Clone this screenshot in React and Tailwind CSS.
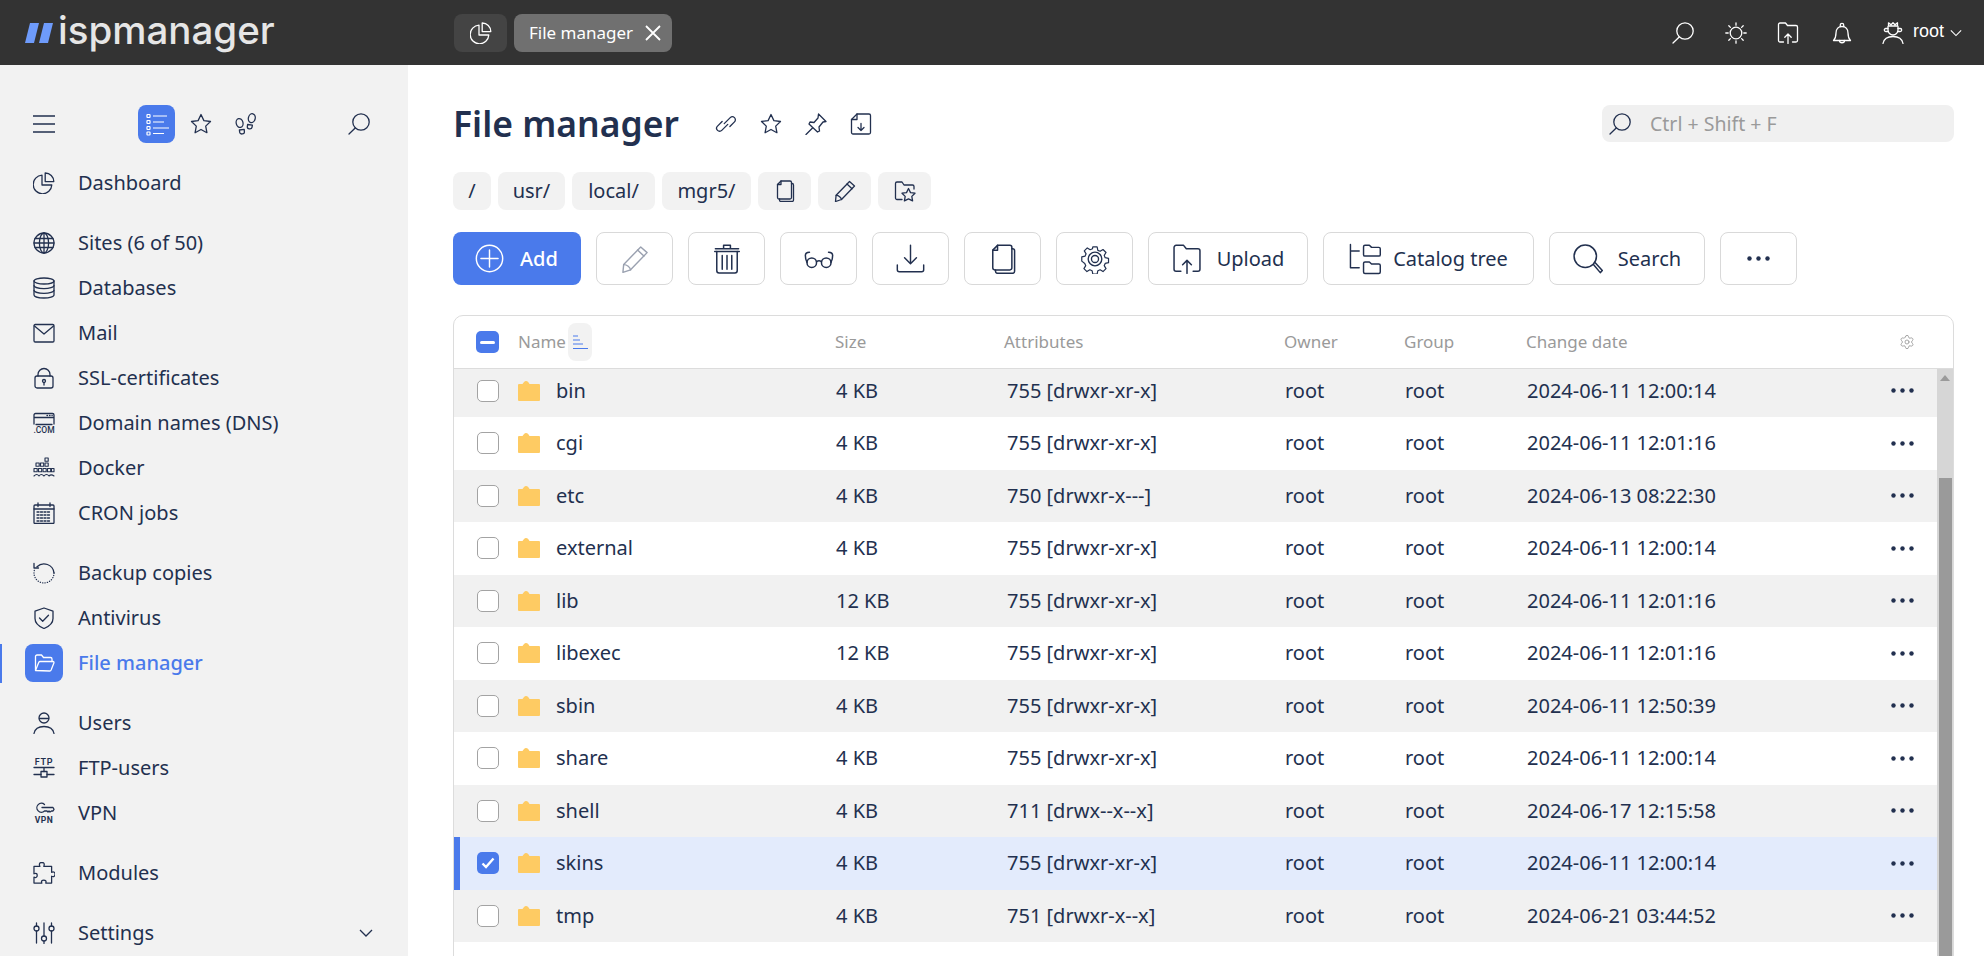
import React from "react";
import { Settings } from "lucide-react";

// base wrapper for all the line icons, drawn on a 22 unit grid
const Ico = ({ s = 22, sw = 1.3, className = "", children }) => (
  <svg
    width={s}
    height={s}
    viewBox="0 0 22 22"
    fill="none"
    stroke="currentColor"
    strokeWidth={sw}
    strokeLinecap="round"
    strokeLinejoin="round"
    className={"shrink-0 " + className}
  >
    {children}
  </svg>
);

const Pie = (p) => (
  <Ico {...p}>
    <path d="M9 3.2A9.3 9.3 0 1 0 18.8 13H9Z" />
    <path d="M12.2 1v8.6h8.6A8.6 8.6 0 0 0 12.2 1Z" />
  </Ico>
);
const Loupe = (p) => (
  <Ico {...p}>
    <circle cx="13" cy="9" r="8.2" />
    <path d="M7.2 15 1 21" />
  </Ico>
);
const Star = (p) => (
  <Ico {...p}>
    <path d="M11 1.5l2.9 6.1 6.6.9-4.8 4.6 1.2 6.6-5.900-3.200-5.900 3.200 1.200-6.600L1.500 8.500l6.600-.9Z" />
  </Ico>
);
const Steps = (p) => (
  <Ico {...p}>
    <ellipse cx="4.600" cy="10" rx="3.400" ry="4.500" transform="rotate(-14 4.600 10)" />
    <path d="M4.400 17l4.800-.7.200 2.600c.2 2.400-4.300 2.900-4.700.5Z" />
    <ellipse cx="16.800" cy="5.200" rx="3.400" ry="4.500" transform="rotate(14 16.800 5.200)" />
    <path d="M17.400 12.200l-4.800-.7-.3 2.300c-.2 2.400 4.300 2.900 4.700.5Z" />
  </Ico>
);
const Globe = (p) => (
  <Ico {...p}>
    <circle cx="11" cy="11" r="10" />
    <ellipse cx="11" cy="11" rx="4.600" ry="10" />
    <path d="M11 1v20M2 6.500h18M1 11h20M2 15.500h18" />
  </Ico>
);
const Db = (p) => (
  <Ico {...p}>
    <ellipse cx="11" cy="4" rx="10" ry="3" />
    <path d="M1 4v14c0 1.700 4.500 3 10 3s10-1.300 10-3V4" />
    <path d="M1 8.600c0 1.700 4.500 3 10 3s10-1.300 10-3M1 13.300c0 1.700 4.500 3 10 3s10-1.300 10-3" />
  </Ico>
);
const Mail = (p) => (
  <Ico {...p}>
    <rect x="1" y="2.500" width="20" height="17.500" rx="1.200" />
    <path d="M1.500 4l9.500 8 9.500-8" />
  </Ico>
);
const Lock = (p) => (
  <Ico {...p}>
    <rect x="2" y="9" width="18" height="12" rx="2" />
    <path d="M5 9V7.500a6 6 0 0 1 12 0V9" />
    <circle cx="11" cy="14" r="1.500" />
    <path d="M11 15.500v2.500" />
  </Ico>
);
const Dns = (p) => (
  <Ico {...p}>
    <path d="M1 12V3a1.500 1.500 0 0 1 1.500-1.500h17A1.500 1.500 0 0 1 21 3v9M1 5.500h20M3 12.500h16" />
    <path d="M14 3.500h.5M16.500 3.500h.5M19 3.500h.2" />
    <text x="11" y="20.500" textAnchor="middle" fontSize="8.500" fontWeight="500" fontFamily="Roboto, sans-serif" fill="currentColor" stroke="none">.COM</text>
  </Ico>
);
const Docker = (p) => (
  <Ico {...p} sw={1.100}>
    <rect x="12" y="1" width="3.200" height="3.200" />
    <rect x="3" y="6" width="3.200" height="3.200" /><rect x="7.500" y="6" width="3.200" height="3.200" /><rect x="12" y="6" width="3.200" height="3.200" />
    <rect x="1" y="11.500" width="3.200" height="3.200" /><rect x="5.500" y="11.500" width="3.200" height="3.200" /><rect x="10" y="11.500" width="3.200" height="3.200" /><rect x="14.500" y="11.500" width="3.200" height="3.200" /><rect x="18.500" y="11.500" width="2.500" height="3.200" />
    <path d="M1 19c2-2 3.500-2 5 0 1.500-2 3-2 5 0 1.500-2 3.500-2 5 0 1.500-1.500 3-1.500 5 0" />
  </Ico>
);
const Cal = (p) => (
  <Ico {...p}>
    <rect x="1" y="3" width="20" height="18.500" rx="1" />
    <path d="M1 7h20M5 1v3.500M17 1v3.500" />
    <path d="M4 10h14M4 13h14M4 16h14M4 19h14" strokeDasharray="2 1.500" />
  </Ico>
);
const Backup = (p) => (
  <Ico {...p}>
    <path d="M4 4.800A10 10 0 0 1 21 11" />
    <path d="M21 11a10 10 0 0 1-20 0A10 10 0 0 1 2 6.500" strokeDasharray="0.200 2.200" />
    <path d="M1 1.500v4.500h4.500" />
  </Ico>
);
const Shield = (p) => (
  <Ico {...p}>
    <path d="M11 1l9 3.200v7.300c0 4.700-4 8-9 10-5-2-9-5.300-9-10V4.200Z" />
    <path d="M6.500 11l3.200 3.200 5.800-6" />
  </Ico>
);
const FolderOpen = (p) => (
  <Ico {...p}>
    <path d="M2.500 18V4.500A1.500 1.500 0 0 1 4 3h4.500l2 2.500h7A1.500 1.500 0 0 1 19 7v2.500" />
    <path d="M2.500 18.500l3.300-8.200A1.500 1.500 0 0 1 7.200 9.500H20a1 1 0 0 1 .9 1.400l-2.800 7.200a1.500 1.500 0 0 1-1.400.9Z" />
  </Ico>
);
const User = (p) => (
  <Ico {...p}>
    <circle cx="11" cy="6" r="5" />
    <path d="M6.500 6.500h9" />
    <path d="M1 21.500c.8-4.300 4-7 10-7s9.200 2.700 10 7" />
  </Ico>
);
const Ftp = (p) => (
  <Ico {...p}>
    <text x="11" y="7.500" textAnchor="middle" fontSize="9" fontWeight="600" letterSpacing="0.800" fontFamily="Roboto, sans-serif" fill="currentColor" stroke="none">FTP</text>
    <path d="M1 10.500h20M11 10.500v4M1 17.500h7M14 17.500h7" />
    <rect x="8" y="14.500" width="6" height="5.500" />
  </Ico>
);
const Vpn = (p) => (
  <Ico {...p}>
    <path d="M11.500 2.500A4.500 4.500 0 1 0 11.500 9h2.500l1 1 1-1 1 1 1.500-1h1.500l1-1.700-1-1.800H9" />
    <text x="11" y="20.500" textAnchor="middle" fontSize="8.500" fontWeight="700" letterSpacing="0.500" fontFamily="Roboto, sans-serif" fill="currentColor" stroke="none">VPN</text>
  </Ico>
);
const Puzzle = (p) => (
  <Ico {...p}>
    <path d="M1 4h6c-1.300-3.500.5-4 2-4s3.300.5 2 4h8v6c2.500-1 3.500.5 3.500 2s-1 3-3.500 2v7h-6c1-2.500-.5-3-2-3s-3 .5-2 3H1v-6c2.500 1 3.300-.5 3.300-2S3.500 10.500 1 11.500Z" transform="translate(0 .5) scale(.98)" />
  </Ico>
);
const Sliders = (p) => (
  <Ico {...p}>
    <path d="M3.500 1v3M3.500 9v12M11 1v13M11 19v2.500M18.500 1v3M18.500 9v12" />
    <circle cx="3.500" cy="6.500" r="2.500" /><circle cx="11" cy="16.500" r="2.500" /><circle cx="18.500" cy="6.500" r="2.500" />
  </Ico>
);
const Chev = ({ s = 14, className = "" }) => (
  <svg width={s} height={s} viewBox="0 0 14 14" fill="none" stroke="currentColor" strokeWidth="1.300" className={"shrink-0 " + className}>
    <path d="M1 4l6 6 6-6" />
  </svg>
);
// two links shifted against each other, like the reference
const Chain = (p) => (
  <Ico {...p}>
    <g transform="rotate(-45 11 11)">
      <path d="M10 6.500H3.500a3 3 0 0 0 0 6H12" />
      <path d="M10 9.500h8.500a3 3 0 0 1 0 6H12" />
    </g>
  </Ico>
);
const Pin = (p) => (
  <Ico {...p}>
    <path d="M13.500 1l7.500 7.500-3 .5-4 5 .5 4-2 1L4 11l1-2 4 .5 4-4.500Z" />
    <path d="M7.500 15L1 21.500" />
  </Ico>
);
const FileDown = (p) => (
  <Ico {...p}>
    <path d="M7 1h12a1.500 1.500 0 0 1 1.500 1.500v17A1.500 1.500 0 0 1 19 21H3a1.500 1.500 0 0 1-1.500-1.500V6.500Z" />
    <path d="M7 1v5.500H1.500M11 10.500v7M8 14.500l3 3 3-3" />
  </Ico>
);
const Copy = (p) => (
  <Ico {...p}>
    <path d="M7 1h9a1.500 1.500 0 0 1 1.500 1.500v15a1.500 1.500 0 0 1-1.500 1.500H5a1.500 1.500 0 0 1-1.500-1.500V4.500Z" />
    <path d="M17.500 3.500h.5A1.500 1.500 0 0 1 19.500 5v15a1.500 1.500 0 0 1-1.500 1.500H7A1.500 1.500 0 0 1 5.500 20v-1" />
    <path d="M7 1v3.500H3.500" />
  </Ico>
);
const Pen = (p) => (
  <Ico {...p}>
    <path d="M15.500 1.500l5 4.500L7.500 19.500l-6 2 .6-6.200Z" />
    <path d="M13 4l5 4.700M2.200 15.400c2.500 0 5 2 5.300 4.100" />
  </Ico>
);
const FolderStar = (p) => (
  <Ico {...p}>
    <path d="M8 19.500H3A1.500 1.500 0 0 1 1.500 18V3.500A1.500 1.500 0 0 1 3 2h5l2 3h8.500A1.500 1.500 0 0 1 20 6.500V9" />
    <path d="M14.500 8.500l2 4.100 4.500.6-3.200 3.200.8 4.500-4.100-2.100-4.100 2.100.8-4.500-3.200-3.200 4.500-.6Z" />
  </Ico>
);
const PlusCircle = (p) => (
  <Ico {...p}>
    <circle cx="11" cy="11" r="10" />
    <path d="M11 4.500v13M4.500 11h13" />
  </Ico>
);
const Trash = (p) => (
  <Ico {...p}>
    <path d="M2 5.500h18M8.500 3.500V1h5v2.500M2.500 3.500h17" />
    <path d="M3.500 5.500v14c0 1 .8 1.800 1.700 1.800h11.600c.9 0 1.700-.8 1.700-1.800v-14" />
    <path d="M7.500 8.500v10M11 8.500v10M14.500 8.500v10" />
  </Ico>
);
const Glasses = (p) => (
  <Ico {...p}>
    <circle cx="5.700" cy="13.700" r="3.500" /><circle cx="16.300" cy="13.700" r="3.500" />
    <path d="M9.200 13c1-.8 2.600-.8 3.600 0" />
    <path d="M2.200 13.500C1.300 12 1 10 1 8.500c0-1.500 1-2.500 3-2.500M19.800 13.500C20.700 12 21 10 21 8.500c0-1.500-1-2.500-3-2.500" />
  </Ico>
);
const Download = (p) => (
  <Ico {...p}>
    <path d="M11 1v13.500M6.500 10.500l4.500 4.500 4.500-4.500" />
    <path d="M1 16v3.500A1.500 1.500 0 0 0 2.500 21h17a1.500 1.500 0 0 0 1.500-1.500V16" />
  </Ico>
);
const Gear = (p) => (
  <Ico {...p}>
    <path d="M9.200 1h3.600l.6 2.800 1.900.8 2.400-1.500 2.500 2.500-1.500 2.400.8 1.900 2.800.6v3.600l-2.800.6-.8 1.900 1.500 2.400-2.500 2.500-2.400-1.500-1.900.8-.6 2.800H9.200l-.6-2.800-1.900-.8-2.400 1.500-2.500-2.500 1.500-2.400-.8-1.900L0 12.800V9.200l2.800-.6.8-1.900-1.500-2.400 2.500-2.500 2.400 1.500 1.900-.8Z" transform="translate(1.300 1.300) scale(.88)" />
    <circle cx="11" cy="11" r="5" /><circle cx="11" cy="11" r="2.600" />
  </Ico>
);
const FolderUp = (p) => (
  <Ico {...p}>
    <path d="M6.500 20H3a1.500 1.500 0 0 1-1.500-1.500v-16A1.500 1.500 0 0 1 3 1h5.500l2 2.500H19A1.500 1.500 0 0 1 20.500 5v13.500A1.500 1.500 0 0 1 19 20h-3.500" />
    <path d="M11 21.500v-9.500M7.800 15.200l3.200-3.200 3.200 3.200" />
  </Ico>
);
const Tree = (p) => (
  <Ico {...p}>
    <path d="M1 1v16h6M1 5.500h6" />
    <path d="M10 2.500a1 1 0 0 1 1-1h3l1.500 1.500h5a1 1 0 0 1 1 1v4a1 1 0 0 1-1 1H11a1 1 0 0 1-1-1Z" />
    <path d="M10 14a1 1 0 0 1 1-1h3l1.500 1.500h5a1 1 0 0 1 1 1v4.500a1 1 0 0 1-1 1H11a1 1 0 0 1-1-1Z" />
  </Ico>
);
const BigLoupe = (p) => (
  <Ico {...p}>
    <circle cx="9" cy="9" r="8.200" />
    <path d="M15 15l5 6 1.500-1.500-5.200-5.800" />
  </Ico>
);
const Sun = (p) => (
  <Ico {...p}>
    <circle cx="11" cy="11" r="5.800" />
    <path d="M11 .8v2.400M11 18.800v2.400M.8 11h2.400M18.800 11h2.400M3.800 3.800l1.600 1.600M16.600 16.600l1.600 1.600M3.800 18.200l1.600-1.600M16.600 5.400l1.600-1.600" />
  </Ico>
);
const Bell = (p) => (
  <Ico {...p}>
    <path d="M2.500 18.500c2-2 2.500-4 2.500-7.500 0-4 2.500-6.500 6-6.500s6 2.500 6 6.500c0 3.500.5 5.500 2.500 7.500Z" />
    <path d="M9.300 4.500V3a1.700 1.700 0 0 1 3.400 0v1.500M8.500 18.500c0 3 5 3 5 0" />
  </Ico>
);
const RootUser = (p) => (
  <Ico {...p}>
    <path d="M6.500 4V.8l2.500 2 2-2 2 2 2.500-2V4Z" />
    <path d="M6 4.500v3.500a5 5 0 0 0 10 0V4.500" />
    <path d="M6 6.500H3.800a1.500 1.500 0 0 0 0 3H6.500M16 6.500h2.200a1.500 1.500 0 0 1 0 3h-2.700" />
    <path d="M1 21.500c.8-4.300 4-7 10-7s9.200 2.700 10 7" />
  </Ico>
);
const ListGlyph = () => (
  <svg width="24" height="24" viewBox="0 0 24 24" fill="none" stroke="#fff" strokeWidth="1.200" className="shrink-0">
    <rect x="2" y="2.500" width="3" height="3" rx=".5" />
    <rect x="2" y="8.500" width="3" height="3" rx=".5" />
    <rect x="2" y="14.500" width="3" height="3" rx=".5" />
    <rect x="2" y="20" width="3" height="3" rx=".5" />
    <path d="M8 4h14M8 10h11M8 16h17M8 21.500h11" />
  </svg>
);
const FolderFill = () => (
  <svg width="22" height="20" viewBox="0 0 22 20" className="shrink-0">
    <path d="M0 4a1 1 0 0 1 1-1h3.500C5.500 1.500 6.500 0 8 0s2.500 1 3.500 3H21a1 1 0 0 1 1 1v15a1 1 0 0 1-1 1H1a1 1 0 0 1-1-1Z" fill="#fecb63" />
  </svg>
);

const navGroups = [
  [["Dashboard", Pie]],
  [
    ["Sites (6 of 50)", Globe],
    ["Databases", Db],
    ["Mail", Mail],
    ["SSL-certificates", Lock],
    ["Domain names (DNS)", Dns],
    ["Docker", Docker],
    ["CRON jobs", Cal],
  ],
  [
    ["Backup copies", Backup],
    ["Antivirus", Shield],
    ["File manager", FolderOpen, true],
  ],
  [
    ["Users", User],
    ["FTP-users", Ftp],
    ["VPN", Vpn],
  ],
  [["Modules", Puzzle]],
  [["Settings", Sliders, false, true]],
];

const files = [
  ["bin", "4 KB", "755 [drwxr-xr-x]", "2024-06-11 12:00:14"],
  ["cgi", "4 KB", "755 [drwxr-xr-x]", "2024-06-11 12:01:16"],
  ["etc", "4 KB", "750 [drwxr-x---]", "2024-06-13 08:22:30"],
  ["external", "4 KB", "755 [drwxr-xr-x]", "2024-06-11 12:00:14"],
  ["lib", "12 KB", "755 [drwxr-xr-x]", "2024-06-11 12:01:16"],
  ["libexec", "12 KB", "755 [drwxr-xr-x]", "2024-06-11 12:01:16"],
  ["sbin", "4 KB", "755 [drwxr-xr-x]", "2024-06-11 12:50:39"],
  ["share", "4 KB", "755 [drwxr-xr-x]", "2024-06-11 12:00:14"],
  ["shell", "4 KB", "711 [drwx--x--x]", "2024-06-17 12:15:58"],
  ["skins", "4 KB", "755 [drwxr-xr-x]", "2024-06-11 12:00:14"],
  ["tmp", "4 KB", "751 [drwxr-x--x]", "2024-06-21 03:44:52"],
];

function TopBar() {
  return (
    <header className="flex h-[65px] shrink-0 items-center bg-[#333333] text-white">
      <div className="flex w-[454px] shrink-0 items-center pl-[25px]">
        <svg width="28" height="20" viewBox="0 0 28 20" className="shrink-0">
          <path d="M5 0h9L9 20H0Z M19 0h9l-5 20h-9Z" fill="#6e9bfb" />
        </svg>
        <span className="ml-[5px] -mt-[5px] text-[38.5px] leading-none font-medium text-[#e6e6e6] font-['Inter',sans-serif]">ispmanager</span>
      </div>
      <div className="flex h-[38px] w-[53px] items-center justify-center rounded-lg bg-[#444444]">
        <Pie />
      </div>
      <div className="ml-[7px] flex h-[38px] w-[158px] items-center rounded-lg bg-[#707070] pl-[15px] text-[17px]">
        <span>File manager</span>
        <svg width="16" height="16" viewBox="0 0 16 16" stroke="currentColor" strokeWidth="1.800" className="ml-auto mr-[11px]">
          <path d="M1 1l14 14M15 1L1 15" />
        </svg>
      </div>
      <div className="ml-auto flex items-center pr-[22px]">
        <Loupe />
        <Sun className="ml-[31px]" />
        <FolderUp className="ml-[30px]" />
        <Bell className="ml-[32px]" />
        <RootUser className="ml-[29px]" />
        <span className="ml-[9px] -mt-[3px] font-['Liberation_Sans',sans-serif] text-[18px]">root</span>
        <Chev s={12} className="ml-[6px]" />
      </div>
    </header>
  );
}

function Sidebar() {
  return (
    <aside className="w-[408px] shrink-0 bg-[#f2f2f2] pt-[40px]">
      <div className="flex h-[38px] items-center pl-[33px]">
        <svg width="22" height="18" viewBox="0 0 22 18" stroke="currentColor" strokeWidth="1.300" className="shrink-0">
          <path d="M0 1h22M0 9h22M0 17h22" />
        </svg>
        <div className="ml-[83px] flex h-[38px] w-[37px] items-center justify-center rounded-lg bg-[#4a7aeb]">
          <ListGlyph />
        </div>
        <Star className="ml-[15px]" />
        <Steps className="ml-[23px]" />
        <Loupe className="ml-[91px]" />
      </div>
      <nav className="mt-[17px] flex flex-col gap-[15px]">
        {navGroups.map((group, i) => (
          <div key={i}>
            {group.map(([label, Icon, active, more]) => (
              <div key={label} className="relative flex h-[45px] items-center pl-[25px]">
                {active && <div className="absolute left-0 top-[4px] h-[39px] w-[2px] bg-[#4a7aeb]" />}
                <div className={"flex h-[38px] w-[38px] items-center justify-center rounded-lg " + (active ? "bg-[#4a7aeb] text-white" : "")}>
                  <Icon />
                </div>
                <span className={"ml-[15px] mt-[1px] text-[20px] " + (active ? "font-medium text-[#4a7aeb]" : "")}>{label}</span>
                {more && <Chev className="ml-auto mr-[35px]" />}
              </div>
            ))}
          </div>
        ))}
      </nav>
    </aside>
  );
}

function ToolBtn({ children, w = "w-[77px]" }) {
  return (
    <button className={"flex h-[53px] items-center justify-center rounded-lg border border-[#d9d9d9] bg-white text-[20px] " + w}>
      {children}
    </button>
  );
}

function Crumb({ children, w }) {
  return <div className={"flex h-[38px] items-center justify-center rounded-lg bg-[#f2f2f2] text-[20px] " + w}>{children}</div>;
}

function Dots() {
  return (
    <svg width="23" height="5" viewBox="0 0 23 5" fill="currentColor" className="shrink-0">
      <circle cx="2.500" cy="2.500" r="2.200" /><circle cx="11.500" cy="2.500" r="2.200" /><circle cx="20.500" cy="2.500" r="2.200" />
    </svg>
  );
}

function FileRow({ file, idx }) {
  const [name, size, attrs, date] = file;
  const selected = name === "skins";
  const bg = selected ? "bg-[#e3ebfc]" : idx % 2 === 0 ? "bg-[#f1f1f1]" : "bg-white";
  return (
    <div className={"flex h-[52.5px] items-center text-[20px] " + bg}>
      <div className={"h-full w-[6px] shrink-0 " + (selected ? "bg-[#4a7aeb]" : "")} />
      {selected ? (
        <div className="ml-[17px] flex h-[22px] w-[22px] shrink-0 items-center justify-center rounded-[5px] bg-[#4a7aeb]">
          <svg width="14" height="12" viewBox="0 0 14 12" fill="none" stroke="#fff" strokeWidth="2.400">
            <path d="M1.500 6.500l3.500 3.500 7.500-8.500" />
          </svg>
        </div>
      ) : (
        <div className="ml-[17px] h-[22px] w-[22px] shrink-0 rounded-[5px] border border-[#a3a3a3] bg-white" />
      )}
      <div className="ml-[19px]"><FolderFill /></div>
      <span className="ml-[16px] w-[280px] shrink-0">{name}</span>
      <span className="w-[171px] shrink-0">{size}</span>
      <span className="w-[278px] shrink-0">{attrs}</span>
      <span className="w-[120px] shrink-0">root</span>
      <span className="w-[122px] shrink-0">root</span>
      <span className="w-[364px] shrink-0">{date}</span>
      <Dots />
    </div>
  );
}

function FileTable() {
  return (
    <div className="mt-[30px] h-[700px] w-[1501px] rounded-t-[10px] border border-[#dcdcdc]">
      <div className="flex h-[53px] items-center border-b border-[#dcdcdc] text-[17px] text-[#9a9a9a]">
        <div className="ml-[22px] flex h-[22px] w-[23px] shrink-0 items-center justify-center rounded-[5px] bg-[#4a7aeb]">
          <div className="h-[3px] w-[15px] rounded-sm bg-white" />
        </div>
        <span className="ml-[19px] w-[50px] shrink-0">Name</span>
        <div className="flex h-[38px] w-[24px] shrink-0 items-center justify-center rounded-lg bg-[#f2f2f2]">
          <svg width="15" height="15" viewBox="0 0 15 15" stroke="#4a7aeb" strokeWidth="1.100">
            <path d="M0 1h5M0 5h7M0 9h10M0 13.500h15" />
          </svg>
        </div>
        <span className="ml-[243px] w-[169px] shrink-0">Size</span>
        <span className="w-[280px] shrink-0">Attributes</span>
        <span className="w-[120px] shrink-0">Owner</span>
        <span className="w-[122px] shrink-0">Group</span>
        <span className="w-[373px] shrink-0">Change date</span>
        <Settings size={16} strokeWidth={1.400} className="shrink-0 text-[#a0a0a0]" />
      </div>
      <div className="flex h-[645px]">
        <div className="min-w-0 flex-1 overflow-hidden">
          <div className="-mt-[4.5px]">
            {files.map((f, i) => (
              <FileRow key={f[0]} file={f} idx={i} />
            ))}
          </div>
        </div>
        <div className="flex w-[16px] shrink-0 flex-col bg-[#d6d6d6]">
          <svg width="10" height="6" viewBox="0 0 10 6" className="ml-[3px] mt-[6px] shrink-0">
            <path d="M5 0l5 6H0Z" fill="#9a9a9a" />
          </svg>
          <div className="ml-[2px] mt-[97px] w-[13px] flex-1 bg-[#9a9a9a]" />
        </div>
      </div>
    </div>
  );
}

export default function App() {
  return (
    <div className="flex h-screen flex-col overflow-hidden bg-white font-['Noto_Sans',sans-serif] text-[#22304f]">
      <TopBar />
      <div className="flex min-h-0 flex-1">
        <Sidebar />
        <main className="min-w-0 flex-1 pl-[45px] pt-[40px]">
          <div className="flex h-[37px] items-center">
            <h1 className="text-[35.5px] leading-none font-semibold">File manager</h1>
            <Chain className="ml-[36px]" />
            <Star className="ml-[23px]" />
            <Pin className="ml-[23px]" />
            <FileDown className="ml-[23px]" />
            <div className="ml-auto mr-[30px] flex h-[37px] w-[352px] items-center rounded-lg bg-[#f0f0f0] pl-[7px]">
              <Loupe />
              <span className="ml-[19px] text-[19.5px] text-[#9a9a9a]">Ctrl + Shift + F</span>
            </div>
          </div>

          <div className="mt-[30px] flex gap-[7px]">
            <Crumb w="w-[38px]">/</Crumb>
            <Crumb w="w-[67px]">usr/</Crumb>
            <Crumb w="w-[83px]">local/</Crumb>
            <Crumb w="w-[89px]">mgr5/</Crumb>
            <Crumb w="w-[53px]"><Copy /></Crumb>
            <Crumb w="w-[53px]"><Pen /></Crumb>
            <Crumb w="w-[53px]"><FolderStar /></Crumb>
          </div>

          <div className="mt-[22px] flex gap-[15px]">
            <button className="flex h-[53px] w-[128px] items-center rounded-lg bg-[#4a7aeb] pl-[22px] text-[20px] font-medium text-white">
              <PlusCircle s={29} sw={1.100} />
              <span className="ml-[16px]">Add</span>
            </button>
            <ToolBtn><Pen s={28} sw={1.100} className="text-[#9aa1b0]" /></ToolBtn>
            <ToolBtn><Trash s={30} sw={1.100} /></ToolBtn>
            <ToolBtn><Glasses s={30} sw={1.100} /></ToolBtn>
            <ToolBtn><Download s={29} sw={1.100} /></ToolBtn>
            <ToolBtn><Copy s={30} sw={1.100} /></ToolBtn>
            <ToolBtn><Gear s={30} sw={1} /></ToolBtn>
            <ToolBtn w="w-[160px]"><FolderUp s={30} sw={1.100} /><span className="ml-[15px]">Upload</span></ToolBtn>
            <ToolBtn w="w-[211px]"><Tree s={32} sw={1} /><span className="ml-[12px]">Catalog tree</span></ToolBtn>
            <ToolBtn w="w-[156px]"><BigLoupe s={30} sw={1.100} /><span className="ml-[15px]">Search</span></ToolBtn>
            <ToolBtn><Dots /></ToolBtn>
          </div>

          <FileTable />
        </main>
      </div>
    </div>
  );
}
